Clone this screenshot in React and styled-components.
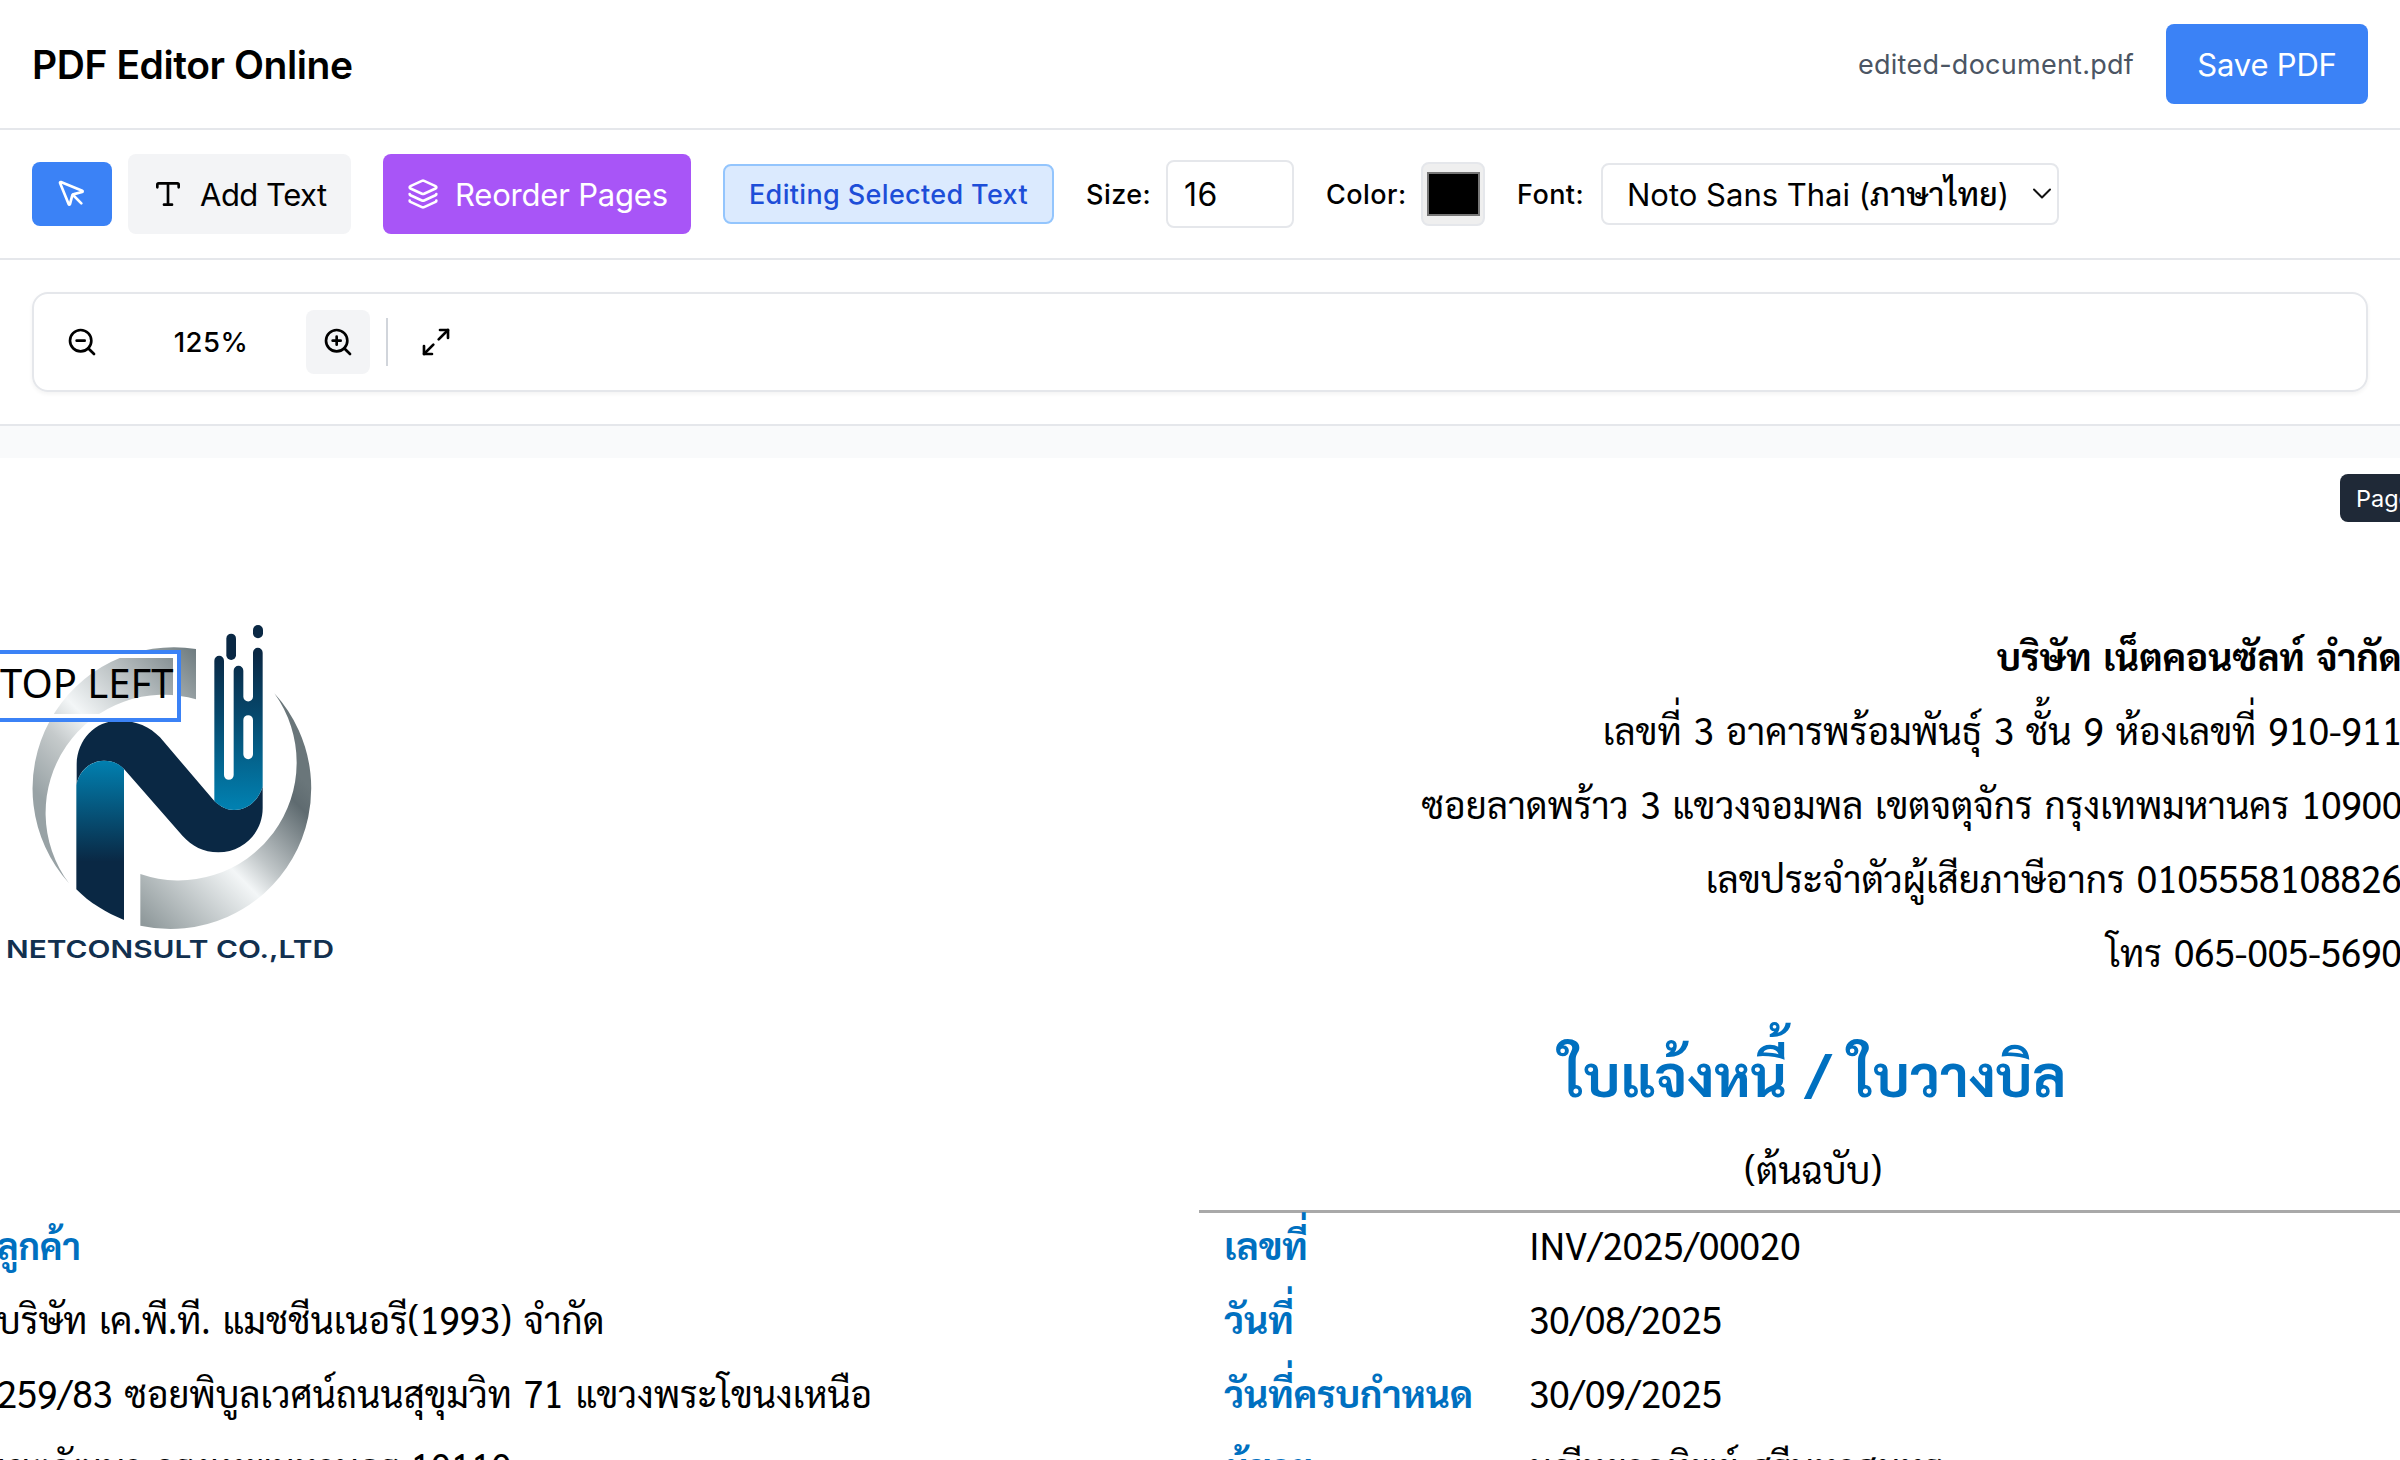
import React from "react";
import styled, { createGlobalStyle } from "styled-components";
import { MousePointer, Type, Layers, ZoomIn, ZoomOut, Maximize2 } from "lucide-react";

const ui = `Inter, "Liberation Sans", sans-serif`;
const doc = `Sarabun, "Noto Sans Thai Looped", "Noto Sans", sans-serif`;

const GlobalStyle = createGlobalStyle`
  * { box-sizing: border-box; }
  html, body { margin: 0; overflow: hidden; background: #fff; }
  body { font-family: ${ui}; color: #000; }
  svg { display: block; flex: none; }
`;

const Shell = styled.div`
  display: flex;
  flex-direction: column;
  width: 2400px;
  height: 1460px;
  overflow: hidden;
`;

const Header = styled.header`
  display: flex;
  align-items: center;
  justify-content: space-between;
  flex: none;
  height: 130px;
  padding: 0 32px;
  border-bottom: 2px solid #e5e7eb;
`;

const Title = styled.h1`
  margin: 0;
  font-size: 39px;
  font-weight: 600;
  letter-spacing: -0.42px;
`;

const HeaderActions = styled.div`
  display: flex;
  align-items: center;
  gap: 32px;
`;

const FileName = styled.span`
  font-size: 27px;
  letter-spacing: 0.25px;
  color: #4b5563;
`;

const Button = styled.button`
  display: flex;
  align-items: center;
  justify-content: ${(p) => (p.$center ? "center" : "flex-start")};
  gap: 16px;
  flex: none;
  width: ${(p) => p.$width}px;
  height: ${(p) => p.$height || 80}px;
  padding: 0 ${(p) => (p.$center ? 0 : 24)}px;
  border: 0;
  border-radius: 8px;
  background: ${(p) => p.$bg || "transparent"};
  color: ${(p) => p.$color || "#000"};
  font: 400 31px ${ui};
  letter-spacing: ${(p) => p.$track || -0.2}px;
  white-space: nowrap;
`;

const Toolbar = styled.div`
  display: flex;
  align-items: center;
  flex: none;
  gap: 32px;
  height: 130px;
  padding: 0 32px;
  border-bottom: 2px solid #e5e7eb;
`;

const Group = styled.div`
  display: flex;
  align-items: center;
  gap: 16px;
`;

const StatusBadge = styled.div`
  display: flex;
  align-items: center;
  justify-content: center;
  width: 331px;
  height: 60px;
  border: 2px solid #93c5fd;
  border-radius: 8px;
  background: #dbeafe;
  color: #1d4ed8;
  font-size: 27px;
  font-weight: 500;
  letter-spacing: 0.35px;
`;

const FieldLabel = styled.label`
  width: ${(p) => p.$width}px;
  font-size: 27px;
  font-weight: 500;
  letter-spacing: 0.45px;
  white-space: nowrap;
`;

const SizeInput = styled.input`
  width: 128px;
  height: 68px;
  padding: 0 16px;
  border: 2px solid #e5e7eb;
  border-radius: 8px;
  font: 400 32px ${ui};
  letter-spacing: 0.5px;
`;

const ColorWell = styled.div`
  display: flex;
  align-items: center;
  justify-content: center;
  width: 64px;
  height: 64px;
  border: 2px solid #e5e7eb;
  border-radius: 8px;
  background: #efefef;
`;

const Swatch = styled.span`
  width: 53px;
  height: 44px;
  border: 2px solid #767676;
  background: #000;
`;

const FontSelect = styled.div`
  display: flex;
  align-items: center;
  justify-content: space-between;
  width: 458px;
  height: 62px;
  padding: 0 5px 0 24px;
  border: 2px solid #e5e7eb;
  border-radius: 8px;
  font-size: 31px;
  line-height: 40px;
  white-space: nowrap;
`;

const ThaiName = styled.span`
  font-family: ${doc};
  font-size: 32px;
  font-weight: 500;
  letter-spacing: 0.2px;
`;

const ZoomSection = styled.div`
  flex: none;
  height: 166px;
  padding: 32px;
  border-bottom: 2px solid #e5e7eb;
`;

const ZoomBar = styled.div`
  display: flex;
  align-items: center;
  gap: 16px;
  height: 100px;
  padding: 0 16px;
  border: 2px solid #e5e7eb;
  border-radius: 16px;
  box-shadow: 0 2px 4px rgba(0, 0, 0, 0.05);
`;

const ZoomValue = styled.span`
  width: 160px;
  padding-left: 2px;
  font-size: 27.5px;
  font-weight: 500;
  letter-spacing: 0.5px;
  text-align: center;
`;

const Separator = styled.span`
  width: 2px;
  height: 48px;
  background: #d1d5db;
`;

const Canvas = styled.main`
  flex: 1;
  min-height: 0;
  padding-top: 32px;
  overflow: hidden;
  background: #f9fafb;
`;

const Page = styled.article`
  position: relative;
  display: grid;
  grid-template-columns: 1199px 1228px;
  width: 2427px;
  height: 1400px;
  background: #fff;
  font-family: ${doc};
  font-size: 38px;
  line-height: 74px;
`;

const LeftColumn = styled.section`
  display: flex;
  flex-direction: column;
  align-items: flex-start;
  padding-top: 142px;
`;

const Logo = styled.svg`
  width: 360px;
  height: 380px;
`;

const Customer = styled.div`
  display: flex;
  flex-direction: column;
  margin: 227px 0 0 -3px;
`;

const RightColumn = styled.section`
  display: flex;
  flex-direction: column;
  padding-top: 160px;
`;

const Company = styled.div`
  display: flex;
  flex-direction: column;
  align-items: flex-end;
  padding-right: 25px;
`;

const Text = styled.span`
  height: 74px;
  margin-top: ${(p) => (p.$raised ? -1 : 0)}px;
  font-weight: ${(p) => (p.$bold ? 700 : 400)};
  color: ${(p) => (p.$blue ? "#0070c0" : "#000")};
  white-space: nowrap;
  word-spacing: 3px;
  transform: scaleX(${(p) => p.$stretch || 0.98});
  transform-origin: ${(p) => p.$from || "left"} center;
`;

const Heading = styled.div`
  display: flex;
  flex-direction: column;
  align-items: center;
  height: 195px;
  margin-top: 30px;
  border-bottom: 3px solid #a9a9a9;
`;

const DocTitle = styled.h2`
  margin: 0 0 3px;
  color: #0070c0;
  font-size: 58px;
  font-weight: 700;
  line-height: 110px;
  white-space: nowrap;
  word-spacing: 5px;
  transform: scaleX(0.97);
`;

const Details = styled.div`
  display: grid;
  grid-template-columns: 305px 1fr;
  justify-items: start;
  margin-top: -6px;
  padding-left: 25px;
`;

const PageTag = styled.div`
  position: absolute;
  top: 16px;
  left: 2340px;
  height: 48px;
  padding: 0 16px;
  border-radius: 8px;
  background: #1f2937;
  color: #fff;
  font: 400 23.5px/49px ${ui};
  white-space: nowrap;
`;

const TextBox = styled.div`
  position: absolute;
  top: 192px;
  left: -8px;
  width: 189px;
  height: 72px;
  padding-left: 4px;
  border: 4px solid #3b82f6;
  box-shadow: inset 0 0 0 4px #fff;
  font: 400 40px/58px "Noto Sans", sans-serif;
  white-space: nowrap;
`;

const company = [
  { text: "บริษัท เน็ตคอนซัลท์ จำกัด", stretch: 0.979, bold: true },
  { text: "เลขที่ 3 อาคารพร้อมพันธุ์ 3 ชั้น 9 ห้องเลขที่ 910-911", stretch: 0.97 },
  { text: "ซอยลาดพร้าว 3 แขวงจอมพล เขตจตุจักร กรุงเทพมหานคร 10900", stretch: 0.967 },
  { text: "เลขประจำตัวผู้เสียภาษีอากร 0105558108826", stretch: 0.975 },
  { text: "โทร 065-005-5690", stretch: 0.97 },
];

const customer = [
  { text: "ลูกค้า", stretch: 0.945, bold: true, blue: true },
  { text: "บริษัท เค.พี.ที. แมชชีนเนอรี(1993) จำกัด", stretch: 0.964 },
  { text: "259/83 ซอยพิบูลเวศน์ถนนสุขุมวิท 71 แขวงพระโขนงเหนือ", stretch: 0.962 },
  { text: "เขตวัฒนา กรุงเทพมหานคร 10110", stretch: 0.965, raised: true },
];

const details = [
  ["เลขที่", "INV/2025/00020"],
  ["วันที่", "30/08/2025"],
  ["วันที่ครบกำหนด", "30/09/2025"],
  ["ผู้ขาย", "มณีหยาดทิพย์ ศรีนทาสมุทร"],
];

function CompanyLogo() {
  return (
    <Logo viewBox="0 0 1080 1140">
      <defs>
        <linearGradient id="ringA" gradientUnits="userSpaceOnUse" x1="588" y1="150" x2="130" y2="600">
          <stop offset="0" stopColor="#6f7c80" />
          <stop offset="0.3" stopColor="#b4bbbd" />
          <stop offset="0.59" stopColor="#f3f6f7" />
          <stop offset="0.75" stopColor="#c5cacb" />
          <stop offset="1" stopColor="#98a2a5" />
        </linearGradient>
        <linearGradient id="ringB" gradientUnits="userSpaceOnUse" x1="442" y1="980" x2="900" y2="530">
          <stop offset="0" stopColor="#8f999b" />
          <stop offset="0.47" stopColor="#f3f6f7" />
          <stop offset="0.6" stopColor="#c0c6c8" />
          <stop offset="0.8" stopColor="#7f898d" />
          <stop offset="0.9" stopColor="#5f6b70" />
          <stop offset="1" stopColor="#6a767a" />
        </linearGradient>
        <linearGradient id="leg" gradientUnits="userSpaceOnUse" x1="0" y1="482" x2="0" y2="785">
          <stop offset="0" stopColor="#0180b0" />
          <stop offset="1" stopColor="#0a2844" />
        </linearGradient>
        <linearGradient id="drip" gradientUnits="userSpaceOnUse" x1="0" y1="160" x2="0" y2="620">
          <stop offset="0" stopColor="#0a2844" />
          <stop offset="0.4" stopColor="#06486c" />
          <stop offset="1" stopColor="#0180b0" />
        </linearGradient>
      </defs>
      <path fill="url(#ringA)" d="M588 147 A424 424 0 0 0 207 850 A354 354 0 0 1 588 298 Z" />
      <path fill="url(#ringB)" d="M823 280 A422 422 0 0 1 421 977 V822 A354 354 0 0 0 823 280 Z" />
      <path
        fill="#0a2844"
        d="M230 555 V495 C230 420 285 362 355 362 C410 362 450 380 480 412 L643 603 C665 622 680 630 702 630 C745 630 775 600 788 560 V625 C788 700 727 757 655 757 C610 757 575 738 548 708 L372 507 C355 490 335 482 312 482 C270 482 235 515 230 555 Z"
      />
      <path fill="url(#leg)" d="M229 555 C237 512 273 482 312 482 C335 482 357 490 372 507 V960 C318 938 268 908 229 868 Z" />
      <path
        fill="url(#drip)"
        fillRule="evenodd"
        d="M643 603 V182 a14.5 14.5 0 0 1 29 0 V525 a14.5 14.5 0 0 0 29 0 V212 a14.5 14.5 0 0 1 29 0 V290 a14.5 14.5 0 0 0 29 0 V158 a14.5 14.5 0 0 1 29 0 V560 C775 600 745 630 702 630 C680 630 660 620 643 603 Z M730 360 V463 a14.5 14.5 0 0 0 29 0 V360 a14.5 14.5 0 0 0 -29 0 Z"
      />
      <rect x="679" y="101" width="29" height="79" rx="14.5" fill="#0a2844" />
      <rect x="759" y="75" width="30" height="40" rx="15" fill="#0a2844" />
      <text
        x="18"
        y="1073"
        textLength="984"
        lengthAdjust="spacingAndGlyphs"
        fontFamily='Inter, "Liberation Sans", sans-serif'
        fontWeight="600"
        fontSize="74"
        fill="#12304f"
      >
        NETCONSULT CO.,LTD
      </text>
    </Logo>
  );
}

function Chevron() {
  return (
    <svg width="22" height="16" viewBox="0 0 22 16" fill="none" stroke="#111" strokeWidth="2" strokeLinecap="round" strokeLinejoin="round">
      <path d="M4 3.5 12 11.5 20 3.5" />
    </svg>
  );
}

export default function App() {
  return (
    <Shell>
      <GlobalStyle />
      <Header>
        <Title>PDF Editor Online</Title>
        <HeaderActions>
          <FileName>edited-document.pdf</FileName>
          <Button $width={202} $center $bg="#3b82f6" $color="#fff">Save PDF</Button>
        </HeaderActions>
      </Header>
      <Toolbar>
        <Group>
          <Button $width={80} $height={64} $center $bg="#3b82f6" $color="#fff"><MousePointer size={32} /></Button>
          <Button $width={223} $bg="#f3f4f6" $track={-0.5}><Type size={32} />Add Text</Button>
        </Group>
        <Button $width={308} $bg="#a855f7" $color="#fff"><Layers size={32} />Reorder Pages</Button>
        <StatusBadge>Editing Selected Text</StatusBadge>
        <Group>
          <FieldLabel $width={64}>Size:</FieldLabel>
          <SizeInput defaultValue="16" />
        </Group>
        <Group>
          <FieldLabel $width={79}>Color:</FieldLabel>
          <ColorWell><Swatch /></ColorWell>
        </Group>
        <Group>
          <FieldLabel $width={68}>Font:</FieldLabel>
          <FontSelect>
            <span>Noto Sans Thai (<ThaiName>ภาษาไทย</ThaiName>)</span>
            <Chevron />
          </FontSelect>
        </Group>
      </Toolbar>
      <ZoomSection>
        <ZoomBar>
          <Button $width={64} $height={64} $center><ZoomOut size={32} /></Button>
          <ZoomValue>125%</ZoomValue>
          <Button $width={64} $height={64} $center $bg="#f3f4f6"><ZoomIn size={32} /></Button>
          <Separator />
          <Button $width={64} $height={64} $center><Maximize2 size={32} /></Button>
        </ZoomBar>
      </ZoomSection>
      <Canvas>
        <Page>
          <LeftColumn>
            <CompanyLogo />
            <Customer>
              {customer.map((l) => (
                <Text key={l.text} $stretch={l.stretch} $bold={l.bold} $blue={l.blue} $raised={l.raised}>{l.text}</Text>
              ))}
            </Customer>
          </LeftColumn>
          <RightColumn>
            <Company>
              {company.map((l) => (
                <Text key={l.text} $stretch={l.stretch} $bold={l.bold} $from="right">{l.text}</Text>
              ))}
            </Company>
            <Heading>
              <DocTitle>ใบแจ้งหนี้ / ใบวางบิล</DocTitle>
              <Text $stretch={0.968} $from="center">(ต้นฉบับ)</Text>
            </Heading>
            <Details>
              {details.map(([label, value], i) => (
                <React.Fragment key={label}>
                  <Text $bold $blue $stretch={0.985} $raised={i === 3}>{label}</Text>
                  <Text $stretch={0.971} $raised={i === 3}>{value}</Text>
                </React.Fragment>
              ))}
            </Details>
          </RightColumn>
          <TextBox>TOP LEFT</TextBox>
          <PageTag>Page 1</PageTag>
        </Page>
      </Canvas>
    </Shell>
  );
}
